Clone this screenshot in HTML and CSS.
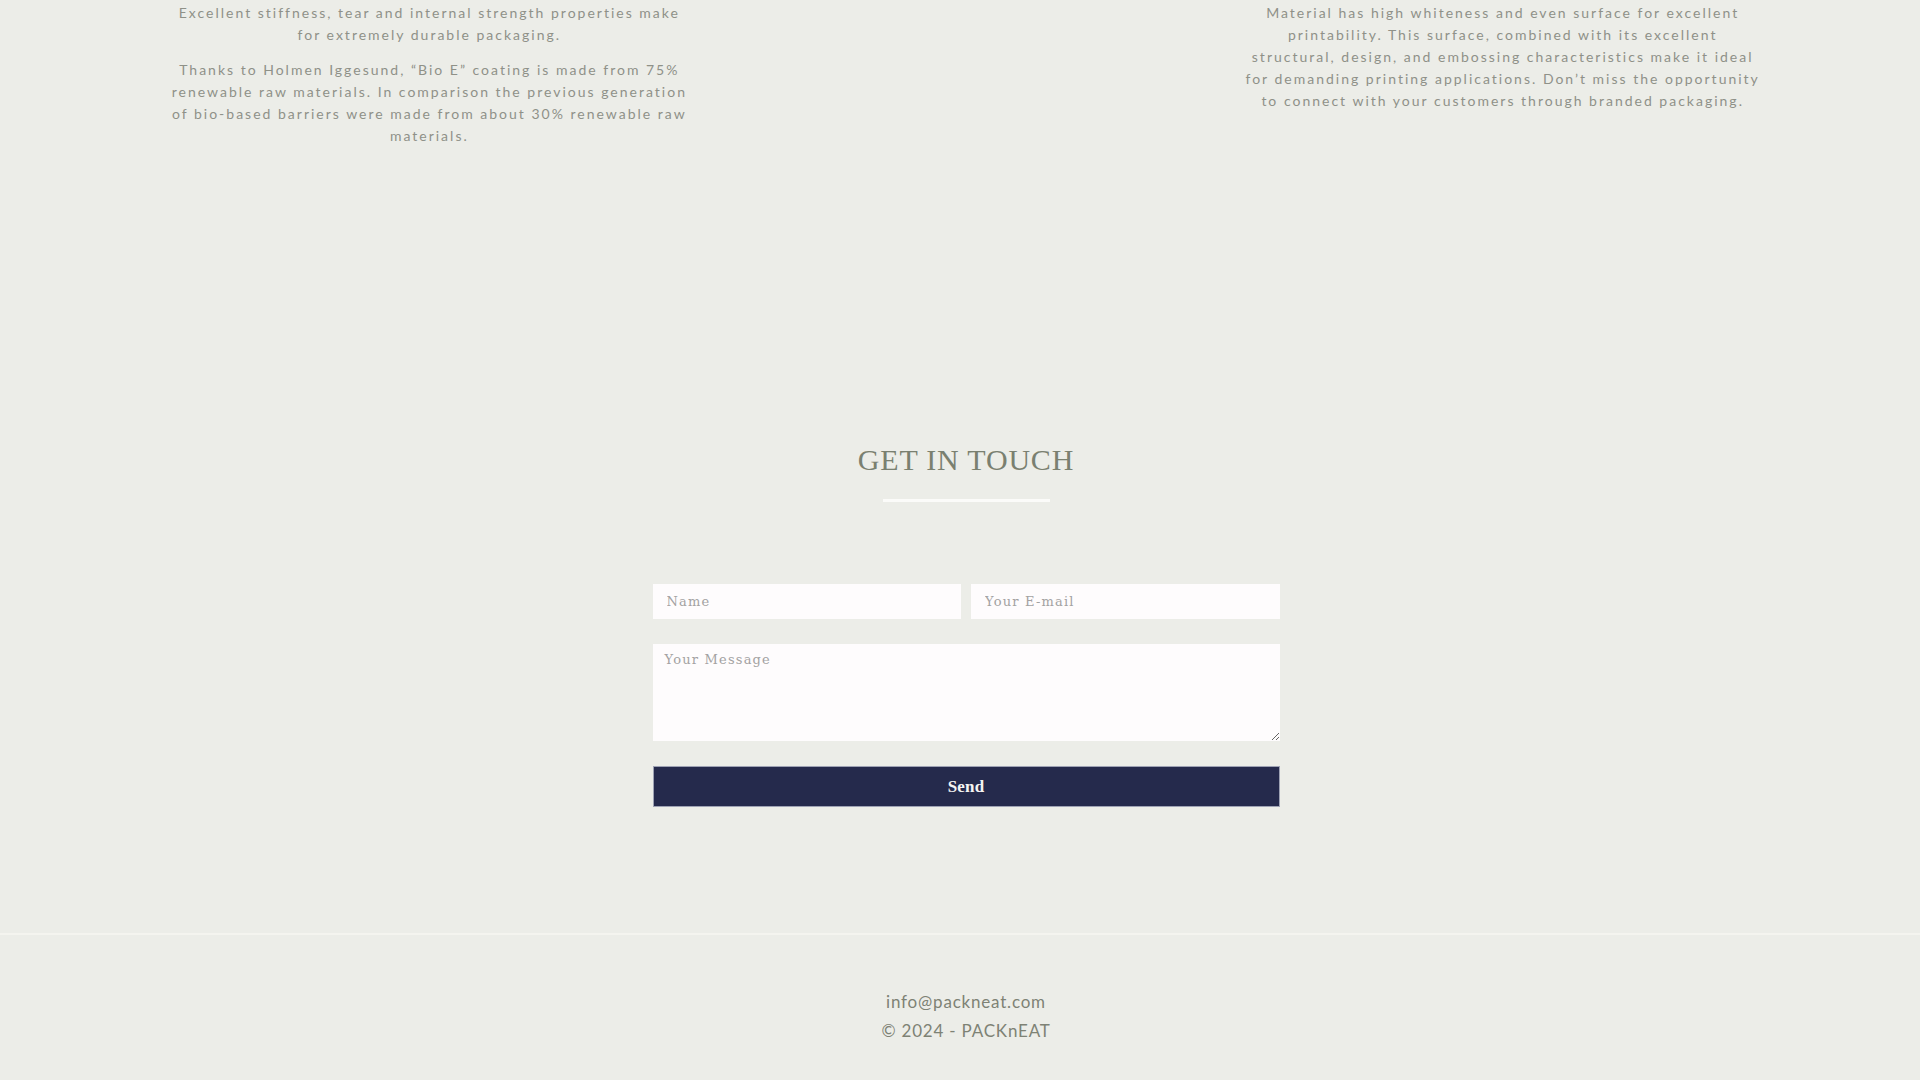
FILE: index.html
```html
<!DOCTYPE html>
<html lang="en">
<head>
<meta charset="utf-8">
<title>PACKnEAT - Get in touch</title>
<link rel="stylesheet" href="styles.css">
</head>
<body>
<main class="page">
  <section class="features">
    <div class="feature">
      <p>Excellent stiffness, tear and internal strength properties make for extremely durable packaging.</p>
      <p>Thanks to Holmen Iggesund, “Bio E” coating is made from 75% renewable raw materials. In comparison the previous generation of bio-based barriers were made from about 30% renewable raw materials.</p>
    </div>
    <div class="feature"></div>
    <div class="feature">
      <p>Material has high whiteness and even surface for excellent printability. This surface, combined with its excellent<br>structural, design, and embossing characteristics make it ideal for demanding printing applications. Don’t miss the opportunity to connect with your customers through branded packaging.</p>
    </div>
  </section>

  <section class="contact">
    <h2 class="contact-title">GET IN TOUCH</h2>
    <div class="contact-rule"></div>
    <form class="contact-form">
      <div class="form-row">
        <input class="field field-line" type="text" placeholder="Name">
        <input class="field field-line" type="email" placeholder="Your E-mail">
      </div>
      <textarea class="field field-message" placeholder="Your Message"></textarea>
      <button class="send" type="button">Send</button>
    </form>
  </section>
</main>
<footer class="footer">
  <div class="footer-inner">
    <div class="footer-line">info@packneat.com</div>
    <div class="footer-line">© 2024 - PACKnEAT</div>
  </div>
</footer>
</body>
</html>
```

FILE: styles.css
```css
html, body {
  margin: 0;
  padding: 0;
  background: #ecede8;
}

body {
  font-family: Lato, "Open Sans", sans-serif;
  color: #8d8f86;
  height: 1080px;
  overflow: hidden;
}

.page {
  padding-left: 12px;
}

.features {
  width: 1610px;
  margin: 0 auto;
  padding-top: 2px;
  display: grid;
  grid-template-columns: repeat(3, 1fr);
}

.feature {
  padding: 0 6px;
  text-align: center;
}

.feature p {
  margin: 0 0 13px;
  font-size: 14px;
  line-height: 22px;
  letter-spacing: 2px;
  color: #8f9188;
}

.contact {
  padding-top: 282px;
  padding-bottom: 126px;
  display: flex;
  flex-direction: column;
  align-items: center;
}

.contact-title {
  margin: 0;
  font-family: "Liberation Serif", "Times New Roman", serif;
  font-weight: 400;
  font-size: 30px;
  line-height: 36px;
  letter-spacing: 0.8px;
  color: #7a8070;
}

.contact-rule {
  width: 167px;
  height: 3px;
  margin-top: 21px;
  background: #fbfbf9;
}

.contact-form {
  margin-top: 82px;
  width: 627px;
  display: flex;
  flex-direction: column;
  gap: 25px;
}

.form-row {
  display: flex;
  gap: 10px;
}

.field {
  box-sizing: border-box;
  border: none;
  outline: none;
  background: #fefcfd;
  padding: 0 14px;
  font-family: "DejaVu Serif", "Liberation Serif", serif;
  font-size: 13px;
  letter-spacing: 1.2px;
  color: #6f7168;
}

.field-line {
  flex: 1 1 0;
  min-width: 0;
  height: 35px;
}

.field::placeholder {
  color: #a3a2a2;
}

.field-message {
  display: block;
  width: 100%;
  height: 97px;
  padding: 7px 12px;
  line-height: 18px;
  resize: vertical;
}

.send {
  height: 41px;
  border: 1px solid #9ea2b4;
  background: #252a4c;
  color: #f5f4f2;
  font-family: "Liberation Serif", "Times New Roman", serif;
  font-weight: 700;
  font-size: 17px;
  letter-spacing: 0.2px;
  cursor: pointer;
}

.footer {
  border-top: 2px solid #f4f4ef;
}

.footer-inner {
  padding-left: 12px;
  padding-top: 52px;
  text-align: center;
}

.footer-line {
  font-family: Lato, "Open Sans", sans-serif;
  font-size: 17px;
  line-height: 29px;
  letter-spacing: 0.8px;
  color: #7e8275;
}
```
